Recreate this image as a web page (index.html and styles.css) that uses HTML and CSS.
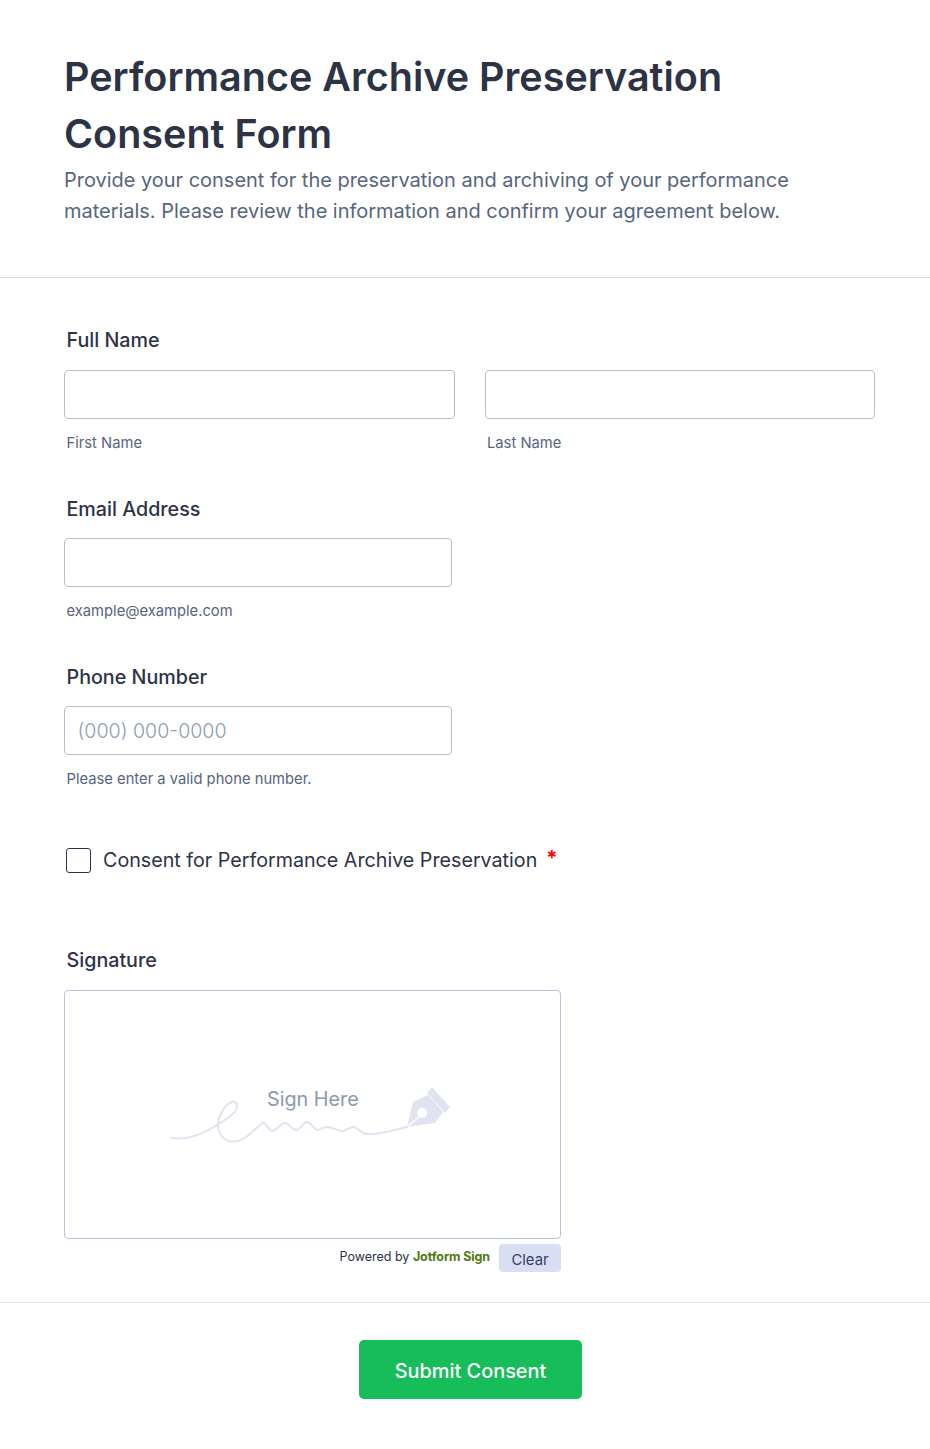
FILE: index.html
```html
<!DOCTYPE html>
<html lang="en">
<head>
    <meta charset="UTF-8">
    <meta name="viewport" content="width=device-width, initial-scale=1.0">
    <title>Performance Archive Preservation Consent Form</title>
    <link rel="stylesheet" href="styles.css">
</head>
<body>

<header class="form-header">
    <h1>Performance Archive Preservation Consent Form</h1>
    <p>Provide your consent for the preservation and archiving of your performance materials. Please review the information and confirm your agreement below.</p>
</header>

<form class="form-body">

    <!-- Full Name -->
    <div class="field">
        <label class="field-label">Full Name</label>
        <div class="name-row">
            <div class="name-col">
                <input type="text" class="text-input">
                <span class="sub-label">First Name</span>
            </div>
            <div class="name-col">
                <input type="text" class="text-input">
                <span class="sub-label">Last Name</span>
            </div>
        </div>
    </div>

    <!-- Email -->
    <div class="field">
        <label class="field-label">Email Address</label>
        <input type="email" class="text-input short">
        <span class="sub-label">example@example.com</span>
    </div>

    <!-- Phone -->
    <div class="field">
        <label class="field-label">Phone Number</label>
        <input type="tel" class="text-input short" placeholder="(000) 000-0000">
        <span class="sub-label">Please enter a valid phone number.</span>
    </div>

    <!-- Consent -->
    <div class="consent-row">
        <span class="checkbox"></span>
        <span class="consent-text">Consent for Performance Archive Preservation</span>
        <span class="required">*</span>
    </div>

    <!-- Signature -->
    <div class="signature-field">
        <label class="field-label">Signature</label>
        <div class="signature-box">
            <div class="sign-art">
                <svg class="sign-svg" width="282" height="60" viewBox="0 0 282 60" fill="none">
                    <path class="sign-line" d="M1 53C16 55 32 50 47 40C55 35 69 27 67 20C66 15 60 16 56 21C50 28 46 38 49 46C52 55 60 58 68 56C78 53 85 44 91 39C96 35 98 45 102 46C107 46 110 38 115 38C119 38 122 45 126 45C131 45 133 37 137 37C141 37 144 45 148 45C151 45 153 42 157 42C163 42 167 46 172 46C177 46 179 42 183 42C188 42 191 49 197 49C210 50 224 45 237 42"/>
                    <path class="sign-pen" d="M237 42L243 17L258 10L273 27L265 38Z"/>
                    <path class="sign-pen" d="M262 2L280 22L275 28L257 8Z"/>
                    <circle class="sign-hole" cx="252" cy="28" r="5"/>
                    <path class="sign-slit" d="M249 32L238 41"/>
                </svg>
                <span class="sign-here">Sign Here</span>
            </div>
        </div>
        <div class="signature-foot">
            <span class="powered">Powered by <b>Jotform Sign</b></span>
            <button type="button" class="clear-btn">Clear</button>
        </div>
    </div>

    <!-- Submit -->
    <div class="submit-row">
        <button type="button" class="submit-btn">Submit Consent</button>
    </div>

</form>

</body>
</html>
```

FILE: styles.css
```css
* { box-sizing: border-box; }
html, body { margin: 0; padding: 0; }
body { font-family: Inter, "Liberation Sans", sans-serif; background: #fff; color: #2c3345; height: 1449px; overflow: hidden; }

.form-header { padding: 49px 64px 50px; border-bottom: 1px solid #d8dae4; }
.form-header h1 { margin: 0; font-size: 39.5px; line-height: 57px; font-weight: 600; color: #2c3345; }
.form-header p { margin: 2px 0 0; font-size: 19.97px; line-height: 31px; color: #566580; }

.form-body { padding-top: 47px; }
.field { padding: 0 55px 0 64px; height: 168px; }
.field-label { display: block; padding-left: 2.5px; height: 30px; margin-bottom: 15px; font-size: 19.7px; line-height: 31px; font-weight: 500; color: #2c3345; }
.field + .field .field-label { padding-top: 1px; }

.name-row { display: flex; gap: 30px; }
.name-col { flex: 1; }
.text-input { display: block; width: 100%; height: 49px; padding: 0 12.5px; border: 1px solid #b8bdc9; border-radius: 4px; background: #fff; font-family: inherit; font-size: 19.6px; font-weight: 300; color: #2c3345; }
.text-input.short { width: 388px; }
.text-input::placeholder { color: #8d9eb0; opacity: 1; }
.sub-label { display: block; padding-left: 2.5px; margin-top: 14px; font-size: 14.75px; line-height: 20px; color: #57647e; }

.consent-row { display: flex; align-items: flex-start; padding-left: 66px; height: 98px; margin-top: 19px; }
.checkbox { width: 25px; height: 25px; border: 1.5px solid #2c3345; border-radius: 3px; background: #fff; }
.consent-text { margin-left: 12px; font-size: 19.7px; line-height: 24px; color: #2c3345; }
.required { margin-left: 9px; font-size: 20px; line-height: 20px; font-weight: 700; color: #f00; }

.signature-field { padding-left: 64px; width: 561px; }
.signature-field .field-label { margin-bottom: 14px; line-height: 29px; }
.signature-box { display: flex; align-items: center; justify-content: center; height: 249px; border: 1px solid #b8c2dc; border-radius: 4px; background: #fff; }
.sign-art { position: relative; width: 282px; height: 60px; margin-right: 3px; }
.sign-svg { display: block; }
.sign-line { stroke: #e1e4f0; stroke-width: 2; stroke-linecap: round; stroke-linejoin: round; }
.sign-pen { fill: #e1e4f0; }
.sign-hole { fill: #fff; }
.sign-slit { stroke: #fff; stroke-width: 1.5; }
.sign-here { position: absolute; left: 97px; top: 0; font-size: 19.8px; line-height: 28px; color: #8c97b2; }

.signature-foot { display: flex; justify-content: flex-end; align-items: flex-start; gap: 9px; margin-top: 5px; height: 58px; }
.powered { margin-top: 5px; font-size: 12.5px; line-height: 16px; color: #2c3345; }
.powered b { font-weight: 700; color: #4f7a10; letter-spacing: -0.1px; }
.clear-btn { width: 62px; height: 28px; padding: 4px 0 0; border: none; border-radius: 4px; background: #dadef3; font-family: inherit; font-size: 14.8px; color: #343c6a; }

.submit-row { display: flex; justify-content: center; padding: 37px 0 0 11px; border-top: 1px solid #e3e5ec; }
.submit-btn { width: 223px; height: 59px; padding: 3px 0 0; border: none; border-radius: 5px; background: #18bd5b; font-family: inherit; font-size: 19.9px; font-weight: 500; color: #fff; }
```
